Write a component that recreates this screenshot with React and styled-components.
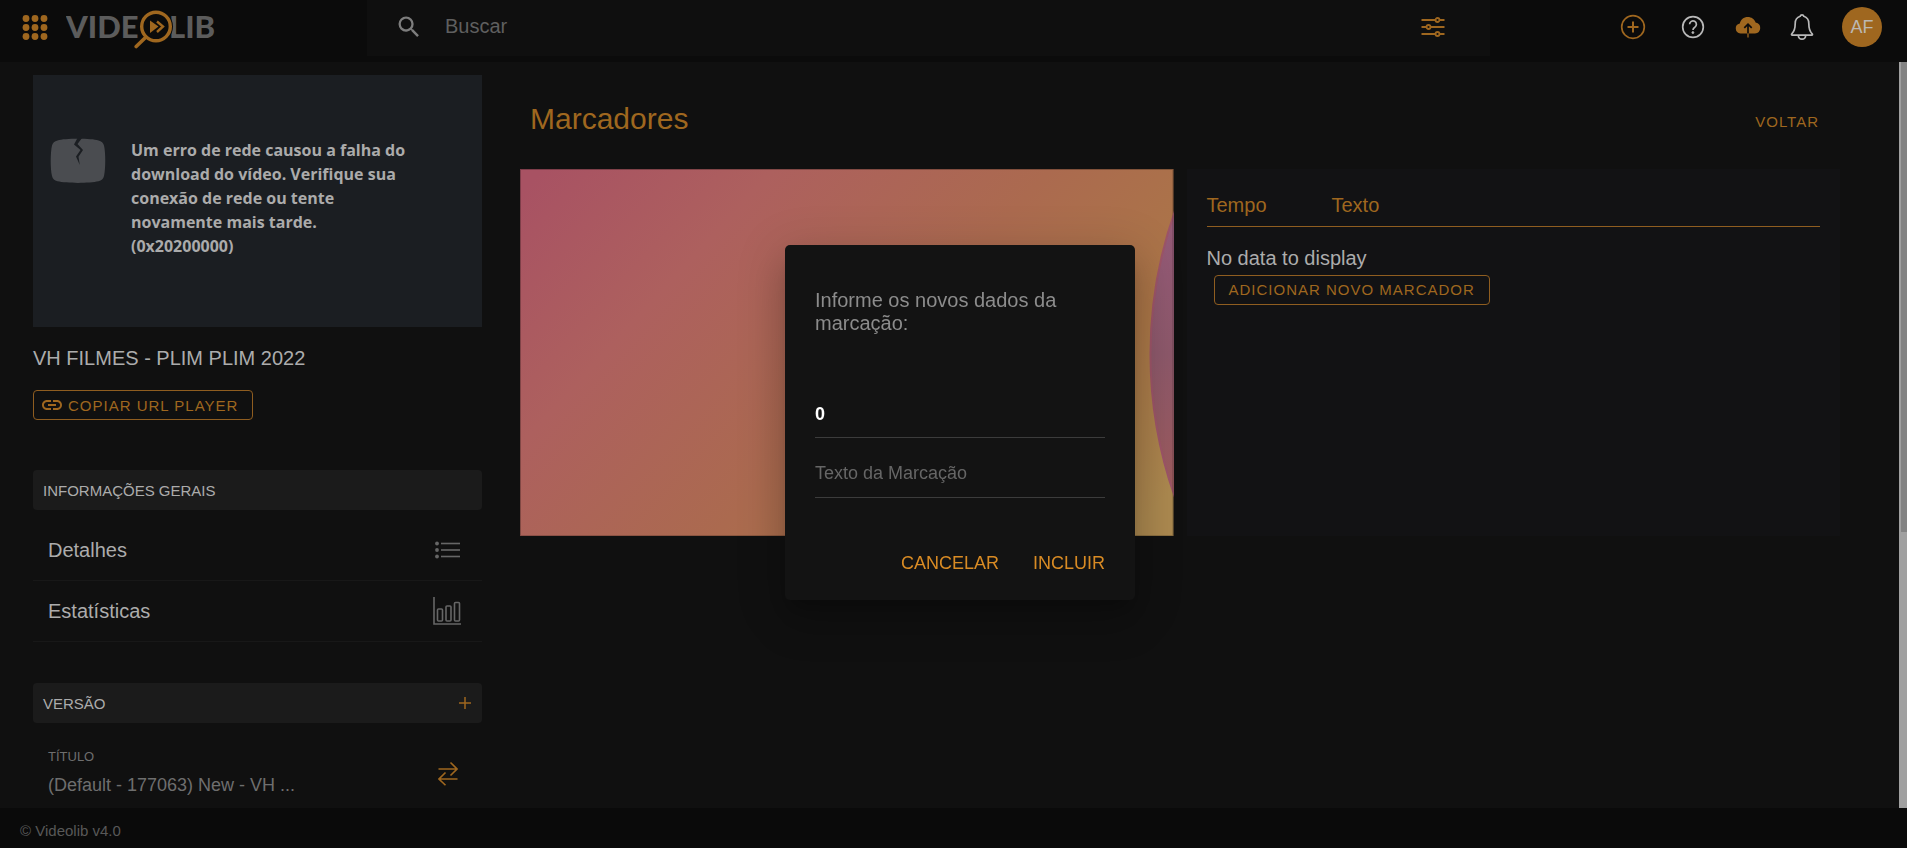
import React from "react";
import styled, { createGlobalStyle } from "styled-components";

const c = {
  page: "#101010",
  bar: "#0b0b0b",
  accent: "#9f671f",
  accentBright: "#d98b24",
  text: "#acacac",
  muted: "#6e6e6e",
};

const GlobalStyle = createGlobalStyle`
  *, *::before, *::after { box-sizing: border-box; }
  html, body, #root { height: 100%; }
  body {
    margin: 0;
    background: ${c.page};
    color: ${c.text};
    font-family: "Liberation Sans", Arial, sans-serif;
    font-size: 20px;
    overflow: hidden;
  }
  button, input { font: inherit; color: inherit; }
  button { cursor: pointer; }
  svg { display: block; flex: none; }
  h1, h2, p { margin: 0; font-weight: 400; }
`;

const Shell = styled.div`
  height: 100vh;
  display: flex;
  flex-direction: column;
`;

const Header = styled.header`
  flex: none;
  height: 62px;
  display: flex;
  align-items: flex-start;
  background: ${c.bar};
`;

const Brand = styled.div`
  flex: 0 0 367px;
  height: 54px;
  padding-left: 22px;
  display: flex;
  align-items: center;
  gap: 18px;
`;

const IconButton = styled.button`
  display: flex;
  align-items: center;
  justify-content: center;
  padding: 0;
  border: 0;
  background: none;
  color: ${(p) => (p.$tone === "light" ? "#b9b9b9" : c.accent)};
`;

const SearchBox = styled.form`
  flex: 1;
  min-width: 0;
  max-width: 1123px;
  height: 56px;
  padding: 0 45px 2px 28px;
  display: flex;
  align-items: center;
  background: #0f0f0f;
  color: #7d7d7d;
`;

const SearchInput = styled.input`
  flex: 1;
  min-width: 0;
  height: 32px;
  margin-left: 22px;
  padding: 0 0 2px;
  border: 0;
  outline: 0;
  background: none;
  &::placeholder { color: #5f5f5f; opacity: 1; }
`;

const Actions = styled.nav`
  height: 54px;
  margin-left: auto;
  padding-right: 25px;
  display: flex;
  align-items: center;
`;

const ActionSlot = styled.div`
  width: ${(p) => p.$width}px;
  display: flex;
  justify-content: center;
`;

const Avatar = styled.button`
  width: 40px;
  height: 40px;
  margin-left: 11px;
  padding: 0;
  border: 0;
  border-radius: 50%;
  background: ${c.accent};
  color: #bcb8b2;
  font-size: 18px;
`;

const Body = styled.div`
  flex: 1;
  min-height: 0;
  display: flex;
`;

const Scroller = styled.div`
  flex: 1;
  min-width: 0;
  overflow: hidden;
  padding: 13px 59px 0 33px;
  display: grid;
  grid-template-columns: minmax(0, 449fr) minmax(0, 1320fr);
  column-gap: 38px;
  align-items: start;
`;

const ScrollTrack = styled.div`
  flex: none;
  width: 8px;
  padding-left: 2px;
  background: #a0a0a0;
`;

const ScrollThumb = styled.div`
  height: 63%;
  background: #838383;
`;

const Footer = styled.footer`
  flex: none;
  height: 40px;
  padding: 6px 20px 0;
  background: #0a0a0a;
  color: #585858;
  font-size: 15px;
  line-height: 34px;
`;

const Player = styled.div`
  aspect-ratio: 449 / 252;
  padding: 63px 16px;
  display: flex;
  align-items: flex-start;
  gap: 24px;
  background: #1b1e22;
  color: #ababab;
  font: 700 16px/24px "Open Sans", "Noto Sans", sans-serif;

  p { font-weight: 700; }
`;

const VideoTitle = styled.h2`
  margin-top: 20px;
  font-size: 20px;
  line-height: 23px;
`;

const OutlineButton = styled.button`
  height: 30px;
  display: inline-flex;
  align-items: center;
  gap: 4px;
  padding: ${(p) => (p.$icon ? "0 14px 0 6px" : "0 14px")};
  border: 1px solid #8f5d20;
  border-radius: 4px;
  background: none;
  color: ${c.accent};
  font-size: 15px;
  letter-spacing: 1px;
  white-space: nowrap;
`;

const CopyRow = styled.div`
  display: flex;
  margin: 20px 0 50px;
`;

const SectionBar = styled.div`
  height: 40px;
  padding: 0 10px;
  display: flex;
  align-items: center;
  justify-content: space-between;
  border-radius: 4px;
  background: #1b1b1b;
  font-size: 15px;
`;

const SectionTitle = styled.h2`
  font-size: 15px;
`;

const MenuList = styled.ul`
  list-style: none;
  margin: 10px 0 41px;
  padding: 0;
`;

const MenuRow = styled.li`
  border-bottom: 1px solid #181818;
`;

const MenuLink = styled.a`
  height: 60px;
  padding: 0 20px 0 15px;
  display: flex;
  align-items: center;
  justify-content: space-between;
  color: ${c.text};
  text-decoration: none;
`;

const MenuIcon = styled.span`
  width: 30px;
  display: flex;
  justify-content: center;
  color: #666;
`;

const VersionRow = styled.div`
  margin-top: 24px;
  padding: 0 19px 0 15px;
  display: flex;
  align-items: center;
  justify-content: space-between;
  color: ${c.muted};
`;

const VersionLabel = styled.p`
  font-size: 13px;
  line-height: 20px;
`;

const VersionName = styled.p`
  margin-top: 6px;
  font-size: 18px;
  line-height: 24px;
`;

const PageHead = styled.div`
  height: 94px;
  padding: 0 21px 0 10px;
  display: flex;
  align-items: center;
  justify-content: space-between;
`;

const PageTitle = styled.h1`
  padding-bottom: 6px;
  color: ${c.accent};
  font-size: 30px;
  line-height: 34px;
`;

const BackLink = styled.a`
  padding-bottom: 2px;
  color: ${c.accent};
  font-size: 15px;
  letter-spacing: 1px;
  text-decoration: none;
`;

const Columns = styled.div`
  display: grid;
  grid-template-columns: minmax(0, 1fr) minmax(0, 1fr);
  gap: 13px;
`;

const Preview = styled.div`
  aspect-ratio: 653 / 367;
  svg { width: 100%; height: 100%; }
`;

const MarkersCard = styled.section`
  padding: 20px 20px 0;
  background: #121214;
`;

const MarkersTable = styled.table`
  width: 100%;
  table-layout: fixed;
  border-collapse: collapse;
  line-height: 23px;
`;

const HeadCell = styled.th`
  width: ${(p) => p.$width || "auto"};
  height: 37px;
  padding: 0 0 4px;
  border-bottom: 1px solid #8f5d20;
  color: ${c.accent};
  font-weight: 400;
  text-align: left;
`;

const EmptyCell = styled.td`
  padding: 20px 0 5px;
`;

const AddRow = styled.div`
  padding-left: 7px;
`;

const Overlay = styled.div`
  position: fixed;
  inset: 0;
  display: flex;
  align-items: center;
  justify-content: center;
  padding: 0 0 4px 13px;
`;

const Dialog = styled.form`
  width: 350px;
  padding: 44px 30px 18px;
  border-radius: 5px;
  background: #131313;
  box-shadow: 0 11px 15px -7px rgba(0, 0, 0, 0.2),
    0 24px 38px 3px rgba(0, 0, 0, 0.14), 0 9px 46px 8px rgba(0, 0, 0, 0.12);
`;

const DialogText = styled.p`
  margin-bottom: 55px;
  color: #8c8c8c;
  line-height: 23px;
`;

const Field = styled.label`
  display: block;
  margin-bottom: ${(p) => p.$gap}px;
`;

const FieldInput = styled.input`
  display: block;
  width: 100%;
  height: ${(p) => p.$height}px;
  padding: ${(p) => p.$padding};
  border: 0;
  border-bottom: 1px solid #3c3c3c;
  border-radius: 0;
  outline: 0;
  background: none;
  color: #fff;
  font-size: 18px;
  font-weight: 700;
  &::placeholder { color: #666; opacity: 1; font-weight: 400; }
`;

const DialogActions = styled.div`
  display: flex;
  justify-content: flex-end;
  gap: 34px;
  height: 36px;
`;

const TextButton = styled.button`
  padding: 0;
  border: 0;
  background: none;
  color: ${c.accentBright};
  font-size: 18px;
`;

const AppsIcon = () => (
  <svg width="26" height="27" viewBox="0 0 26 27" fill="currentColor">
    {[4, 13, 22].map((y) =>
      [4, 13, 22].map((x) => <circle key={`${x}-${y}`} cx={x} cy={y + 0.5} r="3.4" />)
    )}
  </svg>
);

const Logo = () => (
  <svg width="152" height="44" viewBox="0 -2 152 44" role="img" aria-label="Videolib">
    <g fill="#5c5c5c" fontFamily="Lato, sans-serif" fontWeight="900" fontSize="31">
      <text x="0" y="31">VIDE</text>
      <text x="103" y="31">LIB</text>
    </g>
    <circle cx="90" cy="19.500" r="17" fill={c.bar} />
    <circle cx="90" cy="19.500" r="14.300" fill="none" stroke={c.accent} strokeWidth="3.4" />
    <path d="M80 30 70.200 39.500" stroke={c.accent} strokeWidth="3.600" strokeLinecap="round" />
    <path d="M84 13.500 92.500 19.500 84 26Z" fill={c.accent} />
    <path d="M91 14.500 97 19.500 91 25" fill="none" stroke={c.accent} strokeWidth="2.400" />
  </svg>
);

const SearchIcon = () => (
  <svg width="28" height="28" viewBox="0 0 24 24" fill="currentColor">
    <path d="M15.500 14h-.79l-.28-.27A6.471 6.471 0 0 0 16 9.500 6.500 6.500 0 1 0 9.500 16c1.610 0 3.090-.59 4.230-1.570l.27.28v.79l5 4.990L20.490 19l-4.990-5zm-6 0C7.010 14 5 11.990 5 9.500S7.010 5 9.500 5 14 7.010 14 9.500 11.990 14 9.500 14z" />
  </svg>
);

const FilterIcon = () => (
  <svg width="24" height="22" viewBox="0 0 24 22" fill="none" stroke="currentColor" strokeWidth="1.8">
    <path d="M0.500 4h14M18.500 4H23.500M0.500 11h5M9.500 11H23.500M0.500 18h14M18.500 18H23.500" />
    <circle cx="16.500" cy="4" r="2" />
    <circle cx="7.500" cy="11" r="2" />
    <circle cx="16.500" cy="18" r="2" />
  </svg>
);

const AddIcon = () => (
  <svg width="26" height="26" viewBox="0 0 26 26" fill="none" stroke="currentColor" strokeWidth="1.700">
    <circle cx="13" cy="13" r="11.300" />
    <path d="M13 7.500v11M7.500 13h11" strokeWidth="2" />
  </svg>
);

const HelpIcon = () => (
  <svg width="24" height="24" viewBox="0 0 24 24" fill="none" stroke="currentColor" strokeWidth="1.700">
    <circle cx="12" cy="12" r="10.300" />
    <path d="M8.600 9.300a3.400 3.400 0 1 1 5.200 2.900c-1.200.7-1.800 1.200-1.800 2.700" />
    <circle cx="11.900" cy="17.600" r="1" fill="currentColor" strokeWidth="0.800" />
  </svg>
);

const CloudIcon = () => (
  <svg width="26" height="22" viewBox="0 0 26 22">
    <path
      d="M5.500 17.500a5 5 0 0 1-.7-9.900C5.500 3.700 8.800 1 12.800 1c3.600 0 6.700 2.200 7.800 5.400A5.600 5.600 0 0 1 20 17.500Z"
      fill="currentColor"
    />
    <path d="M13 17.500V8.500M9.300 11.800 13 8.200l3.700 3.600" fill="none" stroke={c.bar} strokeWidth="1.700" />
    <path d="M13 17.500V21.500" stroke="currentColor" strokeWidth="1.300" />
  </svg>
);

const BellIcon = () => (
  <svg width="24" height="28" viewBox="0 0 24 28" fill="none" stroke="currentColor" strokeWidth="1.700" strokeLinejoin="round">
    <path d="M12 1.800c-.9 0-1.600.7-1.800 1.500C7 4.300 5.200 7 5.200 10.500c0 6-1.100 8.200-3.400 10.300-.5.500-.3 1.400.5 1.400h19.400c.8 0 1-.9.500-1.400-2.300-2.100-3.400-4.300-3.400-10.300 0-3.500-1.800-6.200-5-7.200-.2-.8-.9-1.500-1.800-1.500Z" />
    <path d="M8.300 22.500c.2 2.300 1.700 3.700 3.700 3.700s3.500-1.400 3.700-3.700" />
  </svg>
);

const BrokenTvIcon = () => (
  <svg width="58" height="46" viewBox="0 0 58 46">
    <path
      d="M29 0.800c9 0 16.500.5 20.500 1.600 3 .7 4.800 2.300 5.500 5.200 1.700 7 1.700 23.500 0 30.500-.7 2.900-2.500 4.500-5.500 5.200-9 2.100-32 2.100-41 0-3-.7-4.800-2.300-5.500-5.200-1.700-7-1.700-23.500 0-30.500.7-2.900 2.500-4.500 5.500-5.200C12.500 1.300 20 .8 29 .8Z"
      fill="#4a4c50"
    />
    <path d="M28.500 0 25 6.500 31.500 12 27 18.500 30.800 27 29.500 18.800 34 12 28.500 6 33 0Z" fill="#1b1e22" />
  </svg>
);

const LinkIcon = () => (
  <svg width="24" height="24" viewBox="0 0 24 24" fill="currentColor">
    <path d="M3.900 12c0-1.710 1.390-3.100 3.100-3.100h4V7H7c-2.760 0-5 2.240-5 5s2.240 5 5 5h4v-1.900H7c-1.710 0-3.100-1.390-3.100-3.100zM8 13h8v-2H8v2zm9-6h-4v1.900h4c1.710 0 3.100 1.390 3.100 3.100s-1.390 3.100-3.100 3.100h-4V17h4c2.760 0 5-2.240 5-5s-2.240-5-5-5z" />
  </svg>
);

const ListIcon = () => (
  <svg width="25" height="18" viewBox="0 0 25 18" fill="currentColor">
    {[2.5, 9, 15.5].map((y) => (
      <g key={y}>
        <circle cx="2" cy={y} r="1.900" />
        <rect x="6" y={y - 0.8} width="19" height="1.600" />
      </g>
    ))}
  </svg>
);

const ChartIcon = () => (
  <svg width="28" height="28" viewBox="0 0 28 28" fill="none" stroke="currentColor" strokeWidth="1.600">
    <path d="M1 0V27H28" />
    <rect x="4.500" y="12" width="5" height="12" rx="1" />
    <rect x="13" y="9" width="5" height="15" rx="1" />
    <rect x="21.500" y="5.500" width="5" height="18.500" rx="1" />
  </svg>
);

const PlusIcon = () => (
  <svg width="14" height="14" viewBox="0 0 14 14" stroke="currentColor" strokeWidth="1.500">
    <path d="M7 1v12M1 7h12" />
  </svg>
);

const SwapIcon = () => (
  <svg width="20" height="28" viewBox="0 -4 20 28" fill="none" stroke="currentColor" strokeWidth="1.600">
    <path d="M0.500 7H18.500M12.500 0.500 19 7 12.500 13.500M19.500 17H1.500M7.500 10.500 1 17 7.500 23.300" />
  </svg>
);

const PreviewArt = () => (
  <svg viewBox="0 0 653 367" preserveAspectRatio="none" role="img" aria-label="Quadro do vídeo">
    <defs>
      <linearGradient id="sky" gradientUnits="userSpaceOnUse" x1="60" y1="-40" x2="560" y2="420">
        <stop offset="0" stopColor="#a85263" />
        <stop offset="0.250" stopColor="#ad605e" />
        <stop offset="0.550" stopColor="#ab6a4f" />
        <stop offset="0.800" stopColor="#ab7647" />
        <stop offset="1" stopColor="#ab884f" />
      </linearGradient>
      <linearGradient id="ball" x1="0" y1="0.340" x2="0" y2="0.660">
        <stop offset="0" stopColor="#955a78" />
        <stop offset="0.500" stopColor="#8c586a" />
        <stop offset="1" stopColor="#9c5a5c" />
      </linearGradient>
    </defs>
    <rect width="653" height="367" fill="url(#sky)" />
    <circle cx="1060" cy="185" r="430" fill="url(#ball)" stroke="#9c5468" strokeWidth="2" />
    <rect x="0.500" y="0.500" width="652" height="366" fill="none" stroke="#000" strokeOpacity="0.250" />
  </svg>
);

const menu = [
  { label: "Detalhes", Icon: ListIcon },
  { label: "Estatísticas", Icon: ChartIcon },
];

const noSubmit = (e) => e.preventDefault();

export default function App() {
  return (
    <>
      <GlobalStyle />
      <Shell>
        <Header>
          <Brand>
            <IconButton type="button" aria-label="Aplicativos"><AppsIcon /></IconButton>
            <Logo />
          </Brand>
          <SearchBox role="search" onSubmit={noSubmit}>
            <SearchIcon />
            <SearchInput type="text" placeholder="Buscar" aria-label="Buscar" />
            <IconButton type="button" aria-label="Filtros"><FilterIcon /></IconButton>
          </SearchBox>
          <Actions>
            <ActionSlot $width={60}>
              <IconButton type="button" aria-label="Adicionar"><AddIcon /></IconButton>
            </ActionSlot>
            <ActionSlot $width={60}>
              <IconButton type="button" $tone="light" aria-label="Ajuda"><HelpIcon /></IconButton>
            </ActionSlot>
            <ActionSlot $width={50}>
              <IconButton type="button" aria-label="Enviar"><CloudIcon /></IconButton>
            </ActionSlot>
            <ActionSlot $width={58}>
              <IconButton type="button" $tone="light" aria-label="Notificações"><BellIcon /></IconButton>
            </ActionSlot>
            <Avatar type="button">AF</Avatar>
          </Actions>
        </Header>

        <Body>
          <Scroller>
            <aside>
              <Player>
                <BrokenTvIcon />
                <p>
                  Um erro de rede causou a falha do<br />
                  download do vídeo. Verifique sua<br />
                  conexão de rede ou tente<br />
                  novamente mais tarde.<br />
                  (0x20200000)
                </p>
              </Player>
              <VideoTitle>VH FILMES - PLIM PLIM 2022</VideoTitle>
              <CopyRow>
                <OutlineButton type="button" $icon><LinkIcon />COPIAR URL PLAYER</OutlineButton>
              </CopyRow>
              <SectionBar>
                <SectionTitle>INFORMAÇÕES GERAIS</SectionTitle>
              </SectionBar>
              <MenuList>
                {menu.map(({ label, Icon }) => (
                  <MenuRow key={label}>
                    <MenuLink href="#">
                      {label}
                      <MenuIcon><Icon /></MenuIcon>
                    </MenuLink>
                  </MenuRow>
                ))}
              </MenuList>
              <SectionBar>
                <SectionTitle>VERSÃO</SectionTitle>
                <IconButton type="button" aria-label="Adicionar versão"><PlusIcon /></IconButton>
              </SectionBar>
              <VersionRow>
                <div>
                  <VersionLabel>TÍTULO</VersionLabel>
                  <VersionName>(Default - 177063) New - VH ...</VersionName>
                </div>
                <MenuIcon>
                  <IconButton type="button" aria-label="Trocar versão"><SwapIcon /></IconButton>
                </MenuIcon>
              </VersionRow>
            </aside>

            <main>
              <PageHead>
                <PageTitle>Marcadores</PageTitle>
                <BackLink href="#">VOLTAR</BackLink>
              </PageHead>
              <Columns>
                <Preview><PreviewArt /></Preview>
                <MarkersCard>
                  <MarkersTable>
                    <thead>
                      <tr>
                        <HeadCell $width="125px">Tempo</HeadCell>
                        <HeadCell>Texto</HeadCell>
                      </tr>
                    </thead>
                    <tbody>
                      <tr>
                        <EmptyCell colSpan={2}>No data to display</EmptyCell>
                      </tr>
                    </tbody>
                  </MarkersTable>
                  <AddRow>
                    <OutlineButton type="button">ADICIONAR NOVO MARCADOR</OutlineButton>
                  </AddRow>
                </MarkersCard>
              </Columns>
            </main>
          </Scroller>
          <ScrollTrack aria-hidden="true"><ScrollThumb /></ScrollTrack>
        </Body>

        <Footer>© Videolib v4.0</Footer>
      </Shell>

      <Overlay>
        <Dialog role="dialog" aria-modal="true" aria-labelledby="dialog-text" onSubmit={noSubmit}>
          <DialogText id="dialog-text">Informe os novos dados da marcação:</DialogText>
          <Field $gap={20}>
            <FieldInput $height={48} $padding="2px 0 0" type="text" defaultValue="0" aria-label="Tempo da Marcação" />
          </Field>
          <Field $gap={48}>
            <FieldInput $height={40} $padding="0 0 8px" type="text" placeholder="Texto da Marcação" aria-label="Texto da Marcação" />
          </Field>
          <DialogActions>
            <TextButton type="button">CANCELAR</TextButton>
            <TextButton type="submit">INCLUIR</TextButton>
          </DialogActions>
        </Dialog>
      </Overlay>
    </>
  );
}
